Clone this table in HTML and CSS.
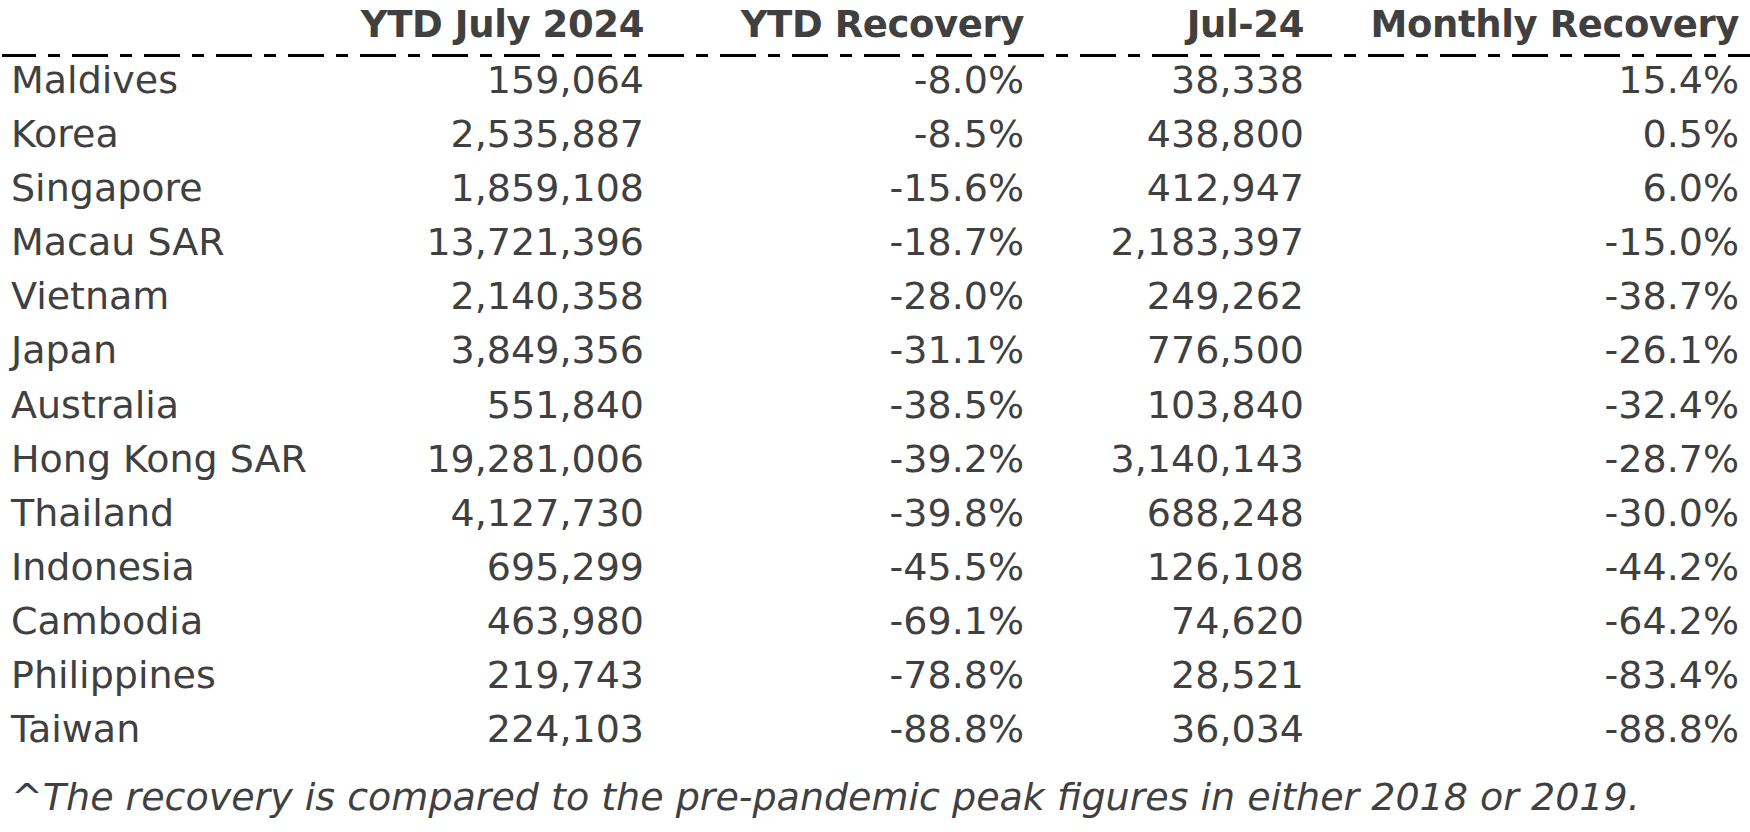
FILE: index.html
```html
<!DOCTYPE html>
<html lang="en">
<head>
<meta charset="utf-8">
<title>Tourism recovery table</title>
<link rel="stylesheet" href="styles.css">
</head>
<body>
<div class="page">
  <div class="grid head">
    <div class="cell name"></div>
    <div class="cell num">YTD July 2024</div>
    <div class="cell num">YTD Recovery</div>
    <div class="cell num">Jul-24</div>
    <div class="cell num">Monthly Recovery</div>
  </div>
  <div class="rule"></div>
  <div class="grid body">
    <div class="cell name">Maldives</div><div class="cell num">159,064</div><div class="cell num">-8.0%</div><div class="cell num">38,338</div><div class="cell num">15.4%</div>
    <div class="cell name">Korea</div><div class="cell num">2,535,887</div><div class="cell num">-8.5%</div><div class="cell num">438,800</div><div class="cell num">0.5%</div>
    <div class="cell name">Singapore</div><div class="cell num">1,859,108</div><div class="cell num">-15.6%</div><div class="cell num">412,947</div><div class="cell num">6.0%</div>
    <div class="cell name">Macau SAR</div><div class="cell num">13,721,396</div><div class="cell num">-18.7%</div><div class="cell num">2,183,397</div><div class="cell num">-15.0%</div>
    <div class="cell name">Vietnam</div><div class="cell num">2,140,358</div><div class="cell num">-28.0%</div><div class="cell num">249,262</div><div class="cell num">-38.7%</div>
    <div class="cell name">Japan</div><div class="cell num">3,849,356</div><div class="cell num">-31.1%</div><div class="cell num">776,500</div><div class="cell num">-26.1%</div>
    <div class="cell name">Australia</div><div class="cell num">551,840</div><div class="cell num">-38.5%</div><div class="cell num">103,840</div><div class="cell num">-32.4%</div>
    <div class="cell name">Hong Kong SAR</div><div class="cell num">19,281,006</div><div class="cell num">-39.2%</div><div class="cell num">3,140,143</div><div class="cell num">-28.7%</div>
    <div class="cell name">Thailand</div><div class="cell num">4,127,730</div><div class="cell num">-39.8%</div><div class="cell num">688,248</div><div class="cell num">-30.0%</div>
    <div class="cell name">Indonesia</div><div class="cell num">695,299</div><div class="cell num">-45.5%</div><div class="cell num">126,108</div><div class="cell num">-44.2%</div>
    <div class="cell name">Cambodia</div><div class="cell num">463,980</div><div class="cell num">-69.1%</div><div class="cell num">74,620</div><div class="cell num">-64.2%</div>
    <div class="cell name">Philippines</div><div class="cell num">219,743</div><div class="cell num">-78.8%</div><div class="cell num">28,521</div><div class="cell num">-83.4%</div>
    <div class="cell name">Taiwan</div><div class="cell num">224,103</div><div class="cell num">-88.8%</div><div class="cell num">36,034</div><div class="cell num">-88.8%</div>
  </div>
  <p class="note">^The recovery is compared to the pre-pandemic peak figures in either 2018 or 2019.</p>
</div>
</body>
</html>
```
FILE: styles.css
```css
html, body {
  margin: 0;
  padding: 0;
  background: #ffffff;
}

.page {
  width: 1750px;
  height: 832px;
  overflow: hidden;
  font-family: "DejaVu Sans", "Liberation Sans", sans-serif;
  color: #404040;
}

.grid {
  display: grid;
  grid-template-columns: 314px 319px 380px 280px 435px;
  padding-left: 11px;
  padding-right: 11px;
}

.cell {
  white-space: nowrap;
}

.num {
  text-align: right;
}

.head {
  font-size: 37px;
  font-weight: 700;
  line-height: 44px;
  padding-top: 2.5px;
  padding-bottom: 7.5px;
  letter-spacing: -0.4px;
}

.rule {
  height: 3px;
  margin-left: 2px;
  background-image: linear-gradient(to right,
    #000 0, #000 36px,
    transparent 36px, transparent 48px,
    #000 48px, #000 60px,
    transparent 60px, transparent 72px);
  background-size: 72px 3px;
  background-position: -2px 0;
  background-repeat: repeat-x;
}

.body {
  font-size: 38px;
  line-height: 46px;
  row-gap: 8.1px;
}

.note {
  margin: 22px 0 0 0;
  padding-left: 11px;
  font-size: 38px;
  line-height: 46px;
  font-style: italic;
  white-space: nowrap;
}
```
